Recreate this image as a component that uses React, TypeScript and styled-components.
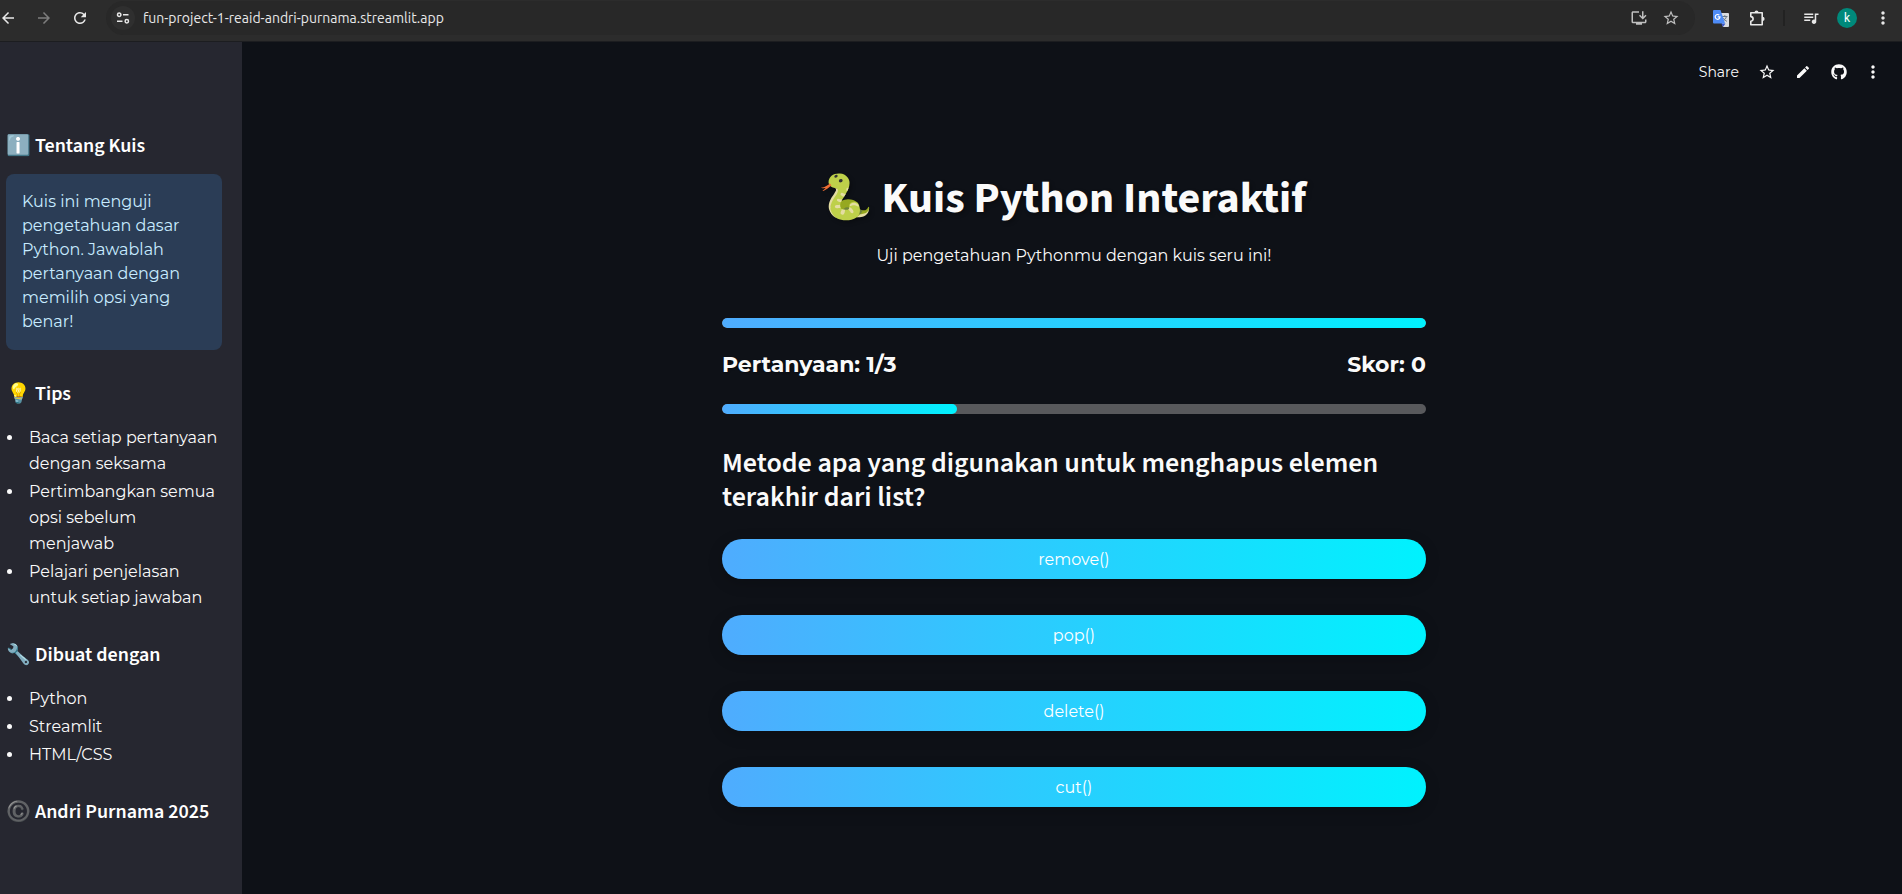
import React from 'react';
import styled, { createGlobalStyle } from 'styled-components';
import {
  MdArrowBack,
  MdArrowForward,
  MdEdit,
  MdMoreVert,
  MdOutlineInstallDesktop,
  MdQueueMusic,
  MdRefresh,
  MdStarBorder,
} from 'react-icons/md';
import { FaGithub } from 'react-icons/fa';

const bodyFont = "Montserrat, 'Open Sans', 'Noto Sans', sans-serif";
const headingFont = "'Source Sans 3', 'Noto Sans CJK SC', 'Noto Sans', sans-serif";
const gradient = 'linear-gradient(to right, #4facfe 0%, #00f2fe 100%)';

const GlobalStyle = createGlobalStyle`
  *, *::before, *::after { box-sizing: border-box; }
  body {
    margin: 0;
    background: #0e1117;
    color: #fafafa;
    font-family: ${bodyFont};
    font-size: 16px;
    line-height: 26px;
  }
  h1, h2, h3, p, ul { margin: 0; padding: 0; }
  button, input { font: inherit; color: inherit; }
`;

const Page = styled.div`
  display: flex;
  flex-direction: column;
  min-height: 100vh;
`;

/* Browser bar */

const BrowserBar = styled.div`
  display: flex;
  align-items: center;
  height: 42px;
  padding: 0 1px 5px 0;
  background: #2c2c2c;
  border-bottom: 1px solid #1c1d20;
  overflow: hidden;
`;

const NavButtons = styled.div`
  display: flex;
  margin-left: -10px;
  margin-right: 8px;
`;

const IconButton = styled.button<{ $width?: number; $color?: string }>`
  display: inline-flex;
  align-items: center;
  justify-content: center;
  flex: none;
  width: ${({ $width = 36 }) => $width}px;
  height: 32px;
  padding: 0;
  border: 0;
  background: none;
  color: ${({ $color = '#e8e8e8' }) => $color};
  cursor: pointer;
`;

const AddressBar = styled.div`
  display: flex;
  flex: 1;
  align-items: center;
  height: 34px;
  margin-right: 8px;
  padding: 0 8px 0 5px;
  border-radius: 17px;
  background: #282828;
`;

const SiteInfoButton = styled.button`
  display: flex;
  align-items: center;
  justify-content: center;
  width: 24px;
  height: 24px;
  margin-right: 8px;
  padding: 0;
  border: 0;
  border-radius: 50%;
  background: #2f2f2f;
`;

const AddressInput = styled.input`
  flex: 1;
  min-width: 0;
  padding: 0;
  border: 0;
  outline: 0;
  background: none;
  color: #e8e8e8;
  font-family: Ubuntu, 'Open Sans', sans-serif;
  font-size: 14px;
  line-height: 20px;
`;

const BarDivider = styled.span`
  width: 2px;
  height: 16px;
  margin: 0 8px;
  background: #222222;
`;

const Avatar = styled.span`
  display: flex;
  align-items: center;
  justify-content: center;
  width: 20px;
  height: 20px;
  border-radius: 50%;
  background: #00897b;
  color: #ffffff;
  font-family: Roboto, sans-serif;
  font-size: 12px;
  line-height: 20px;
`;

/* App frame */

const AppFrame = styled.div`
  display: flex;
  flex: 1;
`;

const Sidebar = styled.aside`
  flex: none;
  width: 242px;
  padding: 60px 20px 48px 6px;
  background: #262730;
`;

const SidebarHeading = styled.h3`
  padding: 32px 0 16px;
  font-family: ${headingFont};
  font-size: 20px;
  font-weight: 600;
  line-height: 24px;
  color: #ffffff;
`;

const InfoBox = styled.div`
  padding: 16px;
  border-radius: 8px;
  background: #2b3d56;
  color: #c7ebff;
  line-height: 24px;
`;

const BulletList = styled.ul`
  display: flex;
  flex-direction: column;
  gap: 2px;
  padding: 3px 0 0 18px;
`;

const Bullet = styled.li`
  padding-left: 5px;
`;

const Main = styled.main`
  flex: 1;
  min-width: 0;
  padding-left: 4px;
`;

const AppHeader = styled.header`
  display: flex;
  align-items: center;
  justify-content: flex-end;
  height: 60px;
  padding-right: 13px;
`;

const ShareButton = styled.button`
  margin-right: 10px;
  padding: 0;
  border: 0;
  background: none;
  font-size: 14px;
  line-height: 20px;
`;

/* Quiz */

const Quiz = styled.section`
  display: flex;
  flex-direction: column;
  width: 100%;
  max-width: 736px;
  margin: 0 auto;
  padding: 70px 16px 64px;
`;

const Title = styled.h1`
  padding-right: 24px;
  font-family: ${headingFont};
  font-size: 44px;
  font-weight: 700;
  line-height: 53px;
  text-align: center;
  text-shadow: 2px 2px 4px rgba(0, 0, 0, 0.3);
`;

const Subtitle = styled.p`
  margin: 18px 0 49px;
  text-align: center;
`;

const Track = styled.div`
  height: 10px;
  border-radius: 5px;
  background: #58595c;
  overflow: hidden;
`;

const Fill = styled.div`
  height: 100%;
  border-radius: 5px;
  background: ${gradient};
`;

const StatusRow = styled.div`
  display: flex;
  justify-content: space-between;
  margin: 22px 0 24px;
  font-size: 22px;
  font-weight: 700;
  line-height: 30px;
  text-shadow: 1px 1px 2px rgba(0, 0, 0, 0.3);
`;

const Question = styled.h2`
  margin: 32px 0 25px;
  font-family: ${headingFont};
  font-size: 28px;
  font-weight: 600;
  line-height: 34px;
`;

const Answers = styled.div`
  display: flex;
  flex-direction: column;
  gap: 36px;
`;

const AnswerButton = styled.button`
  height: 40px;
  padding: 2px 20px 0;
  border: 0;
  border-radius: 20px;
  background: ${gradient};
  box-shadow: 0 4px 15px rgba(0, 0, 0, 0.2);
  color: #ffffff;
  cursor: pointer;
`;

function SiteInfoIcon() {
  return (
    <svg width="14" height="14" viewBox="0 0 14 14" fill="none" stroke="#e8e8e8" strokeWidth="1.5" aria-hidden="true">
      <circle cx="3.2" cy="3.7" r="1.7" />
      <path d="M7 3.7H12.5M1 10.3H6.5" />
      <circle cx="10.8" cy="10.3" r="1.7" />
    </svg>
  );
}

function ExtensionIcon() {
  return (
    <svg width="17" height="17" viewBox="0 0 17 17" aria-hidden="true">
      <path
        d="M1.8 2.8H13.2V14.8H1.8V11.2a2.300 2.300 0 0 0 0-4.600Z"
        fill="none"
        stroke="currentColor"
        strokeWidth="1.600"
        strokeLinejoin="round"
      />
      <path d="M5.500 2.500a2 2 0 0 1 4 0ZM13.500 6.800a2 2 0 0 1 0 4.200Z" fill="currentColor" />
    </svg>
  );
}

function TranslateIcon() {
  return (
    <svg width="16" height="17" viewBox="0 0 16 17" aria-hidden="true">
      <path d="M6 3h9a1 1 0 0 1 1 1v12a1 1 0 0 1-1 1H10z" fill="#dadce0" />
      <path
        d="M9 6.5h5.5M11.8 5.2v1.3M13.4 6.7c-.5 2-1.8 3.4-3.4 4.3M10.4 8c.7 1.5 2 2.7 3.5 3.3"
        stroke="#6b7a86"
        strokeWidth="1"
        fill="none"
      />
      <path d="M8.3 13.5h4.2L10 17z" fill="#3a55c4" />
      <path d="M1 0h6.5l4.6 13.5H1a1 1 0 0 1-1-1V1a1 1 0 0 1 1-1z" fill="#4e8cf7" />
      <path d="M6.3 5.2A2.4 2.4 0 1 0 7 6.8H4.7" stroke="#ffffff" strokeWidth="1.2" fill="none" />
    </svg>
  );
}

const tips = [
  'Baca setiap pertanyaan dengan seksama',
  'Pertimbangkan semua opsi sebelum menjawab',
  'Pelajari penjelasan untuk setiap jawaban',
];
const tools = ['Python', 'Streamlit', 'HTML/CSS'];
const answers = ['remove()', 'pop()', 'delete()', 'cut()'];
const current = 1;
const total = 3;
const score = 0;

function ProgressBar({ label, value }: { label: string; value: number }) {
  return (
    <Track role="progressbar" aria-label={label} aria-valuemin={0} aria-valuemax={100} aria-valuenow={Math.round(value)}>
      <Fill style={{ width: `${value}%` }} />
    </Track>
  );
}

function Browser() {
  return (
    <BrowserBar>
      <NavButtons>
        <IconButton aria-label="Back"><MdArrowBack size={18} /></IconButton>
        <IconButton aria-label="Forward" $color="#7d7d7d"><MdArrowForward size={18} /></IconButton>
        <IconButton aria-label="Reload"><MdRefresh size={18} /></IconButton>
      </NavButtons>
      <AddressBar>
        <SiteInfoButton aria-label="Site information"><SiteInfoIcon /></SiteInfoButton>
        <AddressInput aria-label="Address" defaultValue="fun-project-1-reaid-andri-purnama.streamlit.app" spellCheck={false} />
        <IconButton aria-label="Install app" $width={32} $color="#c0c0c0"><MdOutlineInstallDesktop size={18} /></IconButton>
        <IconButton aria-label="Bookmark" $width={32} $color="#c0c0c0"><MdStarBorder size={18} /></IconButton>
      </AddressBar>
      <IconButton aria-label="Translate"><TranslateIcon /></IconButton>
      <IconButton aria-label="Extensions"><ExtensionIcon /></IconButton>
      <BarDivider />
      <IconButton aria-label="Media"><MdQueueMusic size={18} /></IconButton>
      <IconButton aria-label="Profile"><Avatar>k</Avatar></IconButton>
      <IconButton aria-label="Browser menu"><MdMoreVert size={20} /></IconButton>
    </BrowserBar>
  );
}

export default function App() {
  return (
    <>
      <GlobalStyle />
      <Page>
        <Browser />
        <AppFrame>
          <Sidebar>
            <SidebarHeading>ℹ️ Tentang Kuis</SidebarHeading>
            <InfoBox>
              Kuis ini menguji pengetahuan dasar Python. Jawablah pertanyaan dengan memilih opsi yang benar!
            </InfoBox>
            <SidebarHeading>💡 Tips</SidebarHeading>
            <BulletList>
              {tips.map((tip) => <Bullet key={tip}>{tip}</Bullet>)}
            </BulletList>
            <SidebarHeading>🔧 Dibuat dengan</SidebarHeading>
            <BulletList>
              {tools.map((tool) => <Bullet key={tool}>{tool}</Bullet>)}
            </BulletList>
            <SidebarHeading>©️ Andri Purnama 2025</SidebarHeading>
          </Sidebar>
          <Main>
            <AppHeader>
              <ShareButton>Share</ShareButton>
              <IconButton aria-label="Favorite" $color="#fafafa"><MdStarBorder size={18} /></IconButton>
              <IconButton aria-label="Edit" $color="#fafafa"><MdEdit size={16} /></IconButton>
              <IconButton aria-label="View on GitHub" $color="#fafafa"><FaGithub size={16} /></IconButton>
              <IconButton aria-label="App menu" $width={32} $color="#fafafa"><MdMoreVert size={20} /></IconButton>
            </AppHeader>
            <Quiz>
              <Title>🐍 Kuis Python Interaktif</Title>
              <Subtitle>Uji pengetahuan Pythonmu dengan kuis seru ini!</Subtitle>
              <ProgressBar label="Kuis" value={100} />
              <StatusRow>
                <span>Pertanyaan: {current}/{total}</span>
                <span>Skor: {score}</span>
              </StatusRow>
              <ProgressBar label="Pertanyaan" value={(current / total) * 100} />
              <Question>Metode apa yang digunakan untuk menghapus elemen terakhir dari list?</Question>
              <Answers>
                {answers.map((answer) => <AnswerButton key={answer}>{answer}</AnswerButton>)}
              </Answers>
            </Quiz>
          </Main>
        </AppFrame>
      </Page>
    </>
  );
}
